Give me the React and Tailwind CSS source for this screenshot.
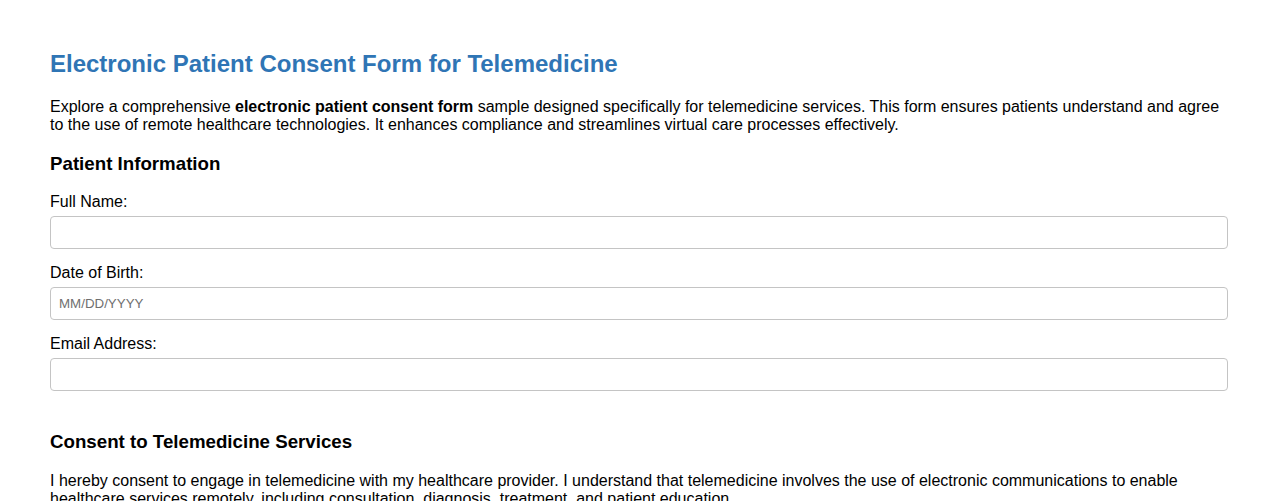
export default function App() {
  const fields = [
    { label: 'Full Name:', placeholder: '' },
    { label: 'Date of Birth:', placeholder: 'MM/DD/YYYY' },
    { label: 'Email Address:', placeholder: '' },
  ];

  return (
    <div className="min-h-screen bg-white px-[50px] pt-[50px] text-black font-['Liberation_Sans',Arial,sans-serif]">
      <h1 className="text-[24px] leading-[28px] font-bold text-[#2f75b5]">
        Electronic Patient Consent Form for Telemedicine
      </h1>

      <p className="mt-[20px] text-[16px] leading-[18px]">
        Explore a comprehensive <strong>electronic patient consent form</strong> sample designed specifically for telemedicine services. This form ensures patients understand and agree to the use of remote healthcare technologies. It enhances compliance and streamlines virtual care processes effectively.
      </p>

      {/* Patient info */}
      <h2 className="mt-[19px] text-[18.72px] leading-[21px] font-bold">Patient Information</h2>
      <div className="mt-[19px] flex flex-col gap-[15px]">
        {fields.map((f) => (
          <div key={f.label}>
            <label className="block text-[16px] leading-[18px]">{f.label}</label>
            <input
              type="text"
              placeholder={f.placeholder}
              className="mt-[5px] block h-[33px] w-full rounded-[4px] border border-[#c4c4c4] px-[8px] text-[13.33px] placeholder:text-[#6f6f6f] outline-none"
            />
          </div>
        ))}
      </div>

      {/* Consent */}
      <h2 className="mt-[41px] text-[18.72px] leading-[20px] font-bold">Consent to Telemedicine Services</h2>
      <p className="mt-[20px] text-[16px] leading-[18px]">
        I hereby consent to engage in telemedicine with my healthcare provider. I understand that telemedicine involves the use of electronic communications to enable healthcare services remotely, including consultation, diagnosis, treatment, and patient education.
      </p>
    </div>
  );
}
